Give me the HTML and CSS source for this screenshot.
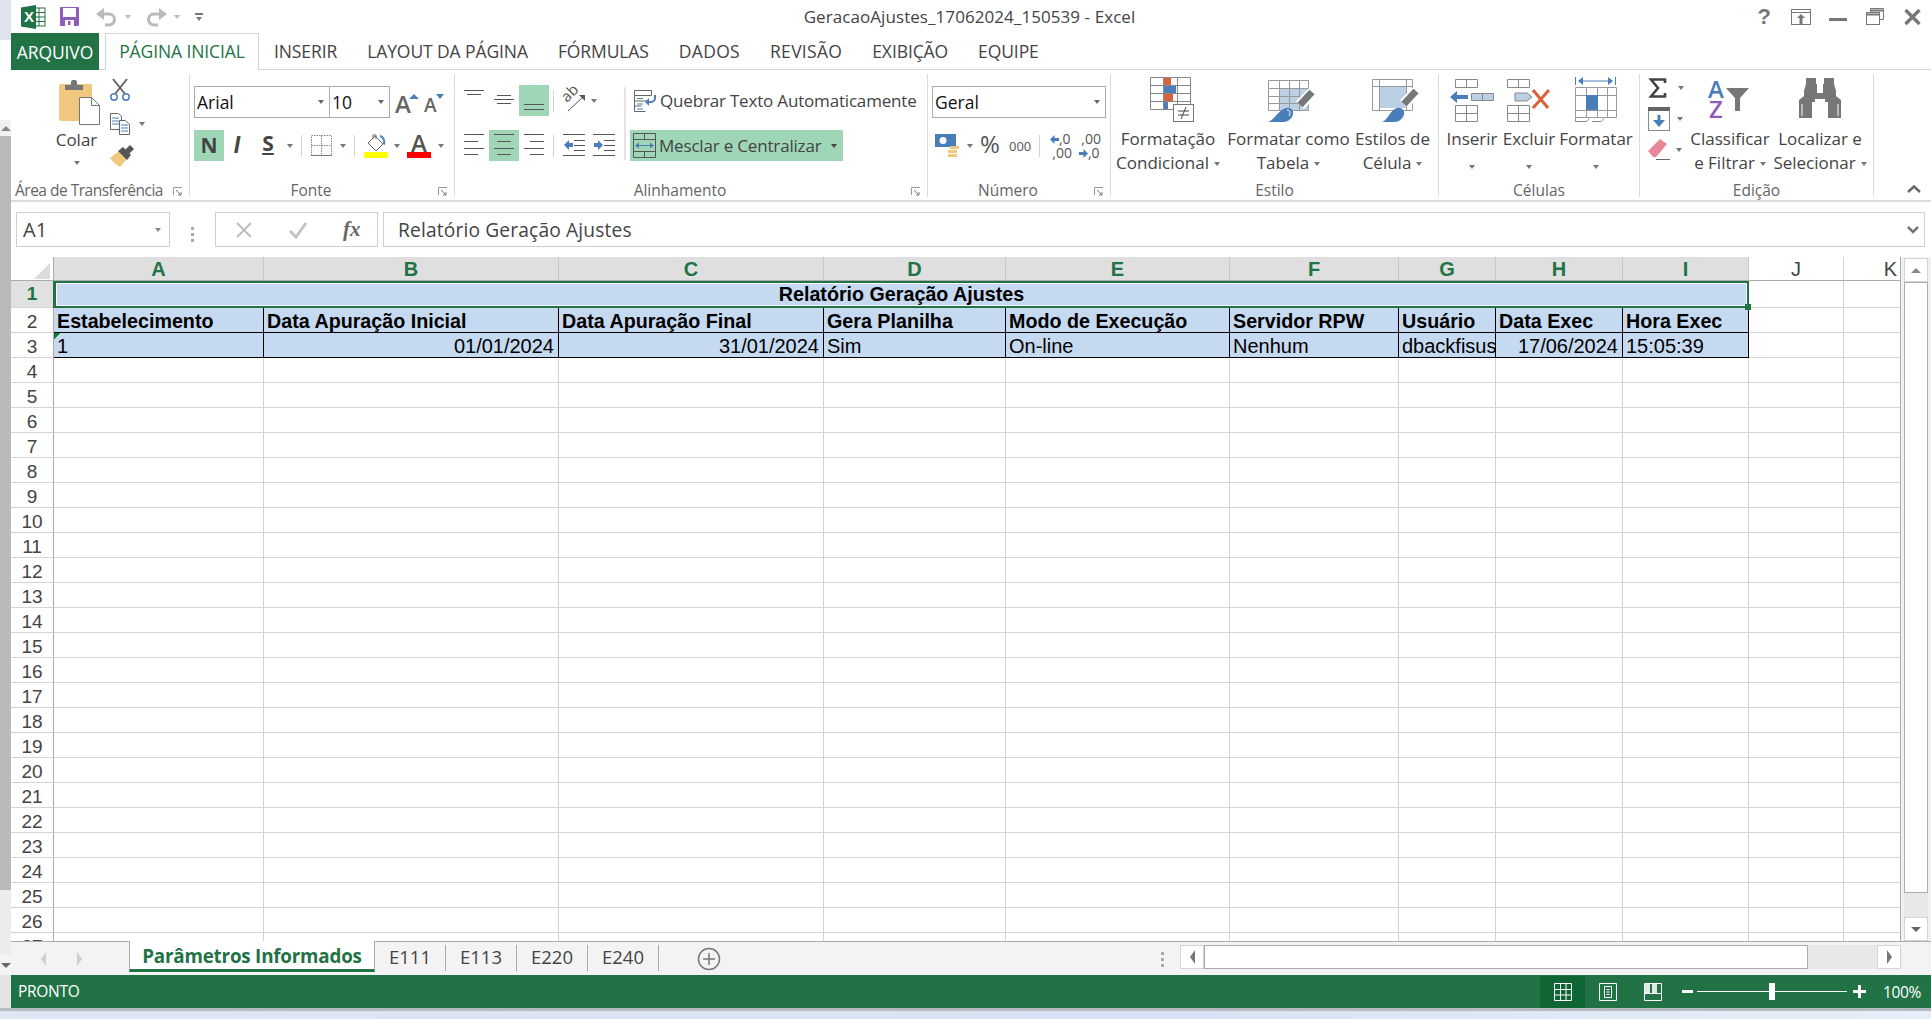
FILE: index.html
```html
<!DOCTYPE html>
<html lang="pt-BR">
<head>
<meta charset="utf-8">
<title>GeracaoAjustes_17062024_150539 - Excel</title>
<link rel="stylesheet" href="styles.css">
</head>
<body>
<div class="app">
  <aside class="side">
    <div class="side-top"></div>
    <div class="side-white"></div>
    <div class="side-arrow"><b class="tri-up"></b></div>
    <div class="side-thumb"></div>
    <div class="side-track"></div>
    <div class="side-arrow down"><b class="tri-down"></b></div>
    <div class="side-end"></div>
  </aside>
  <main class="main">
    <header class="titlebar">
      <div class="qat">
        <svg class="i-logo" viewBox="0 0 24 24"><rect x="14" y="3" width="10" height="18" fill="#fff" stroke="#1f7246"/><path d="M14 7.500h10M14 12h10M14 16.500h10M18 3v18" stroke="#1f7246" fill="none"/><path d="M0 2.500 15 0v24L0 21.500z" fill="#1f7246"/><text x="3" y="17" class="logo-x">X</text></svg>
        <svg class="i-save" viewBox="0 0 19 19"><path d="M0 1a1 1 0 0 1 1-1h17a1 1 0 0 1 1 1v17a1 1 0 0 1-1 1H1a1 1 0 0 1-1-1z" fill="#8f5db7"/><rect x="3" y="1" width="13" height="9" fill="#fff"/><rect x="5" y="13" width="9" height="6" fill="#fff"/><rect x="8" y="14" width="2.500" height="4" fill="#8f5db7"/></svg>
        <svg class="i-undo" viewBox="0 0 22 20"><path d="M0 7 8 1v12z" fill="#bbb"/><path d="M7 7h6a5.500 5.500 0 0 1 0 11H9" fill="none" stroke="#bbb" stroke-width="3"/></svg>
        <b class="caret pale m7"></b>
        <svg class="i-undo m14" viewBox="0 0 22 20"><path d="M22 7 14 1v12z" fill="#bbb"/><path d="M15 7H9a5.500 5.500 0 0 0 0 11h4" fill="none" stroke="#bbb" stroke-width="3"/></svg>
        <b class="caret pale m7"></b>
        <span class="custom m15"><i></i><b class="caret"></b></span>
      </div>
      <div class="doc-title">GeracaoAjustes_17062024_150539 - Excel</div>
      <div class="winbtns">
        <span class="help">?</span>
        <svg class="w-box" viewBox="0 0 20 16"><rect x=".5" y=".5" width="19" height="15" fill="none" stroke="#777"/><path d="M1 3.500h18" stroke="#777"/><path d="M10 5l4 4h-2.500v6h-3V9H6z" fill="#777"/></svg>
        <svg class="w-min" viewBox="0 0 18 3"><rect width="18" height="3" fill="#777"/></svg>
        <svg class="w-res" viewBox="0 0 18 17"><path d="M4.500 4V.5h13v11H14" fill="none" stroke="#777"/><path d="M4 2.500h14" stroke="#777" stroke-width="2"/><rect x=".5" y="4.500" width="13" height="12" fill="#fff" stroke="#777"/><path d="M0 6.500h14" stroke="#777" stroke-width="2"/></svg>
        <svg class="w-close" viewBox="0 0 17 16"><path d="M1.500 1l14 14M15.500 1l-14 14" stroke="#777" stroke-width="3.400"/></svg>
      </div>
    </header>

    <nav class="tabs">
      <a class="tab file">ARQUIVO</a>
      <a class="tab active">PÁGINA INICIAL</a>
      <a class="tab">INSERIR</a>
      <a class="tab">LAYOUT DA PÁGINA</a>
      <a class="tab">FÓRMULAS</a>
      <a class="tab wide">DADOS</a>
      <a class="tab wide">REVISÃO</a>
      <a class="tab">EXIBIÇÃO</a>
      <a class="tab">EQUIPE</a>
    </nav>

    <section class="ribbon">
      <div class="grp g-clip">
        <div class="grp-body clip-body">
          <div class="paste">
            <svg class="i-paste" viewBox="0 0 42 46"><rect y="5" width="33" height="37" rx="2" fill="#efc77f"/><path d="M6 11V6h6V3a2 2 0 0 1 2-2h2a2 2 0 0 1 2 2v3h6v5z" fill="#777"/><path d="M20.500 18.500h12l8 8v19h-20z" fill="#fff" stroke="#777"/><path d="M32.500 18.500v8h8" fill="none" stroke="#777"/></svg>
            <span class="lbl">Colar</span>
            <b class="caret big-caret"></b>
          </div>
          <div class="clip-tools">
            <svg class="i-cut" viewBox="0 0 20 22"><path d="M3 0l12 15M17 0L5 15" stroke="#666" stroke-width="2" fill="none"/><circle cx="4" cy="18" r="3.200" fill="#fff" stroke="#4a7ebb" stroke-width="1.500"/><circle cx="16" cy="18" r="3.200" fill="#fff" stroke="#4a7ebb" stroke-width="1.500"/></svg>
            <span class="row-c"><svg class="i-copy" viewBox="0 0 20 22"><path d="M.5.500h8l3 3v13H.5z" fill="#fff" stroke="#666"/><path d="M2 5h7M2 8h7M2 11h7" stroke="#4a7ebb"/><path d="M9.500 7.500h6l4 4v10h-10z" fill="#fff" stroke="#666"/><path d="M11 12h7M11 15h7M11 18h7" stroke="#4a7ebb"/></svg><b class="caret m9"></b></span>
            <svg class="i-brush" viewBox="0 0 24 22"><path d="M0 13l9-7 8 8-7 8C6 20 3 17 0 13z" fill="#efc77f"/><path d="M8 6l5-4 8 8-4 5z" fill="#555"/><path d="M15 5l5-5 4 4-5 5z" fill="#555"/></svg>
          </div>
        </div>
        <div class="grp-label launchable tight">Área de Transferência<svg class="launch" viewBox="0 0 10 9"><path d="M.5 8V.5H9" fill="none" stroke="#999"/><path d="M3 3l5 5M8 5v3H5" fill="none" stroke="#777"/></svg></div>
      </div>

      <div class="grp g-font">
        <div class="grp-body stack">
          <div class="rbrow">
            <div class="combo font-name"><span>Arial</span><b class="caret"></b></div>
            <div class="combo font-size"><span>10</span><b class="caret"></b></div>
            <span class="grow-a m5">A<b class="tip up"></b></span>
            <span class="shrink-a m12">A<b class="tip dn"></b></span>
          </div>
          <div class="rbrow">
            <span class="fbtn on bold">N</span>
            <span class="fbtn ital">I</span>
            <span class="fbtn under m6">S</span>
            <b class="caret m7"></b>
            <i class="vsep m8"></i>
            <svg class="i-border m9" viewBox="0 0 21 21"><path d="M.5.500h20v20H.5zM10.500.5v20M.5 10.500h20" fill="none" stroke="#888" stroke-dasharray="1.500 1"/><path d="M0 20.500h21" stroke="#777"/></svg>
            <b class="caret m8"></b>
            <i class="vsep m8"></i>
            <svg class="i-fill m9" viewBox="0 0 24 24"><path d="M11 2l8 8-7 7-8-8z" fill="#fff" stroke="#666"/><path d="M9 5V1h3v4" fill="none" stroke="#666"/><path d="M16 1c4 1 6 5 5 10l-2-1c1-4-1-6-3-7z" fill="#4a7ebb"/><rect y="18" width="24" height="6" fill="#ffff00"/></svg>
            <b class="caret m6"></b>
            <span class="fcolor m7">A</span>
            <b class="caret m7"></b>
          </div>
        </div>
        <div class="grp-label launchable">Fonte<svg class="launch" viewBox="0 0 10 9"><path d="M.5 8V.5H9" fill="none" stroke="#999"/><path d="M3 3l5 5M8 5v3H5" fill="none" stroke="#777"/></svg></div>
      </div>

      <div class="grp g-align">
        <div class="grp-body align-body">
          <div class="align-left">
            <div class="rbrow">
              <span class="cell"><svg class="i-line" viewBox="0 0 20 31"><path d="M0 5.500h20M3 9.500h14" stroke="#555"/></svg></span>
              <span class="cell"><svg class="i-line" viewBox="0 0 20 31"><path d="M3 10.500h14M0 14.500h20M3 18.500h14" stroke="#555"/></svg></span>
              <span class="cell on"><svg class="i-line" viewBox="0 0 20 31"><path d="M0 19.500h20M0 24.500h20" stroke="#555"/></svg></span>
              <i class="vsep m4"></i>
              <svg class="i-orient m11" viewBox="0 0 21 22"><text class="orient-t" transform="translate(2 13) rotate(-45)" x="0" y="0">ab</text><path d="M3 21L19 6" stroke="#555" fill="none"/><path d="M14 5h6v6z" fill="#555"/></svg>
              <b class="caret m5"></b>
            </div>
            <div class="rbrow">
              <span class="cell"><svg class="i-line" viewBox="0 0 20 31"><path d="M0 4.500h20M0 11.500h14M0 18.500h20M0 24.500h14" stroke="#555"/></svg></span>
              <span class="cell on"><svg class="i-line" viewBox="0 0 20 31"><path d="M0 4.500h20M3 11.500h14M0 18.500h20M3 24.500h14" stroke="#555"/></svg></span>
              <span class="cell"><svg class="i-line" viewBox="0 0 20 31"><path d="M0 4.500h20M6 11.500h14M0 18.500h20M6 24.500h14" stroke="#555"/></svg></span>
              <i class="vsep m4"></i>
              <svg class="i-indent m9" viewBox="0 0 22 31"><path d="M0 4.500h22M11 10.500h11M11 15.500h11M11 20.500h11M0 25.500h22" stroke="#555"/><path d="M1 15l5-5v3h4v4H6v3z" fill="#4a7ebb"/></svg>
              <svg class="i-indent m8" viewBox="0 0 22 31"><path d="M0 4.500h22M11 10.500h11M11 15.500h11M11 20.500h11M0 25.500h22" stroke="#555"/><path d="M10 15l-5-5v3H1v4h4v3z" fill="#4a7ebb"/></svg>
            </div>
          </div>
          <i class="thick"></i>
          <div class="align-right">
            <div class="wrap rbrow">
              <svg class="i-wrap" viewBox="0 0 23 22"><path d="M.5.500h17v5H.5zM.5 5.500v16h11M.5 11h13M.5 16h7" fill="none" stroke="#666"/><path d="M3 8.500h6M3 14h6M3 19h6" stroke="#4a7ebb"/><path d="M21 5v3a4 4 0 0 1-4 4h-4" fill="none" stroke="#4a7ebb" stroke-width="2"/><path d="M11 12l4-4v8z" fill="#4a7ebb"/></svg>
              <span class="lbl wrap-t">Quebrar Texto Automaticamente</span>
            </div>
            <div class="merge rbrow">
              <svg class="i-merge" viewBox="0 0 23 25"><path d="M.5.500h22v24H.5zM.5 6.500h22M.5 18.500h22M11.500.5v6M11.500 18.500v6" fill="none" stroke="#555"/><path d="M3 12.500h17" stroke="#4a7ebb"/><path d="M2 12.500l4-3v6zM21 12.500l-4-3v6z" fill="#4a7ebb"/></svg>
              <span class="lbl wrap-t">Mesclar e Centralizar</span>
              <b class="caret dark m10"></b>
            </div>
          </div>
        </div>
        <div class="grp-label launchable">Alinhamento<svg class="launch" viewBox="0 0 10 9"><path d="M.5 8V.5H9" fill="none" stroke="#999"/><path d="M3 3l5 5M8 5v3H5" fill="none" stroke="#777"/></svg></div>
      </div>

      <div class="grp g-num">
        <div class="grp-body stack">
          <div class="rbrow"><div class="combo num-fmt"><span>Geral</span><b class="caret"></b></div></div>
          <div class="rbrow num-tools">
            <svg class="i-cur" viewBox="0 0 25 24"><rect width="21" height="13" fill="#4a7ebb"/><circle cx="8" cy="6.500" r="3.500" fill="#fff"/><path d="M15 12h9v3h-9zM13 16h9v3h-9zM13 20h9v3h-9z" fill="#efc77f"/></svg>
            <b class="caret m7"></b>
            <span class="pct m7">%</span>
            <span class="thou m9">000</span>
            <i class="vsep m9"></i>
            <span class="dec m10"><svg class="i-arrow" viewBox="0 0 9 9"><path d="M0 4.500L4.500 0v3H9v3H4.500v3z" fill="#4a7ebb"/></svg><em>,0</em><em class="w2">,00</em></span>
            <span class="dec m7"><em class="w3">,00</em><em class="w4">,0</em><svg class="i-arrow second" viewBox="0 0 9 9"><path d="M9 4.500L4.500 0v3H0v3h4.500v3z" fill="#4a7ebb"/></svg></span>
          </div>
        </div>
        <div class="grp-label launchable">Número<svg class="launch" viewBox="0 0 10 9"><path d="M.5 8V.5H9" fill="none" stroke="#999"/><path d="M3 3l5 5M8 5v3H5" fill="none" stroke="#777"/></svg></div>
      </div>

      <div class="grp g-style">
        <div class="grp-body bigs">
          <div class="big b-cf">
            <span class="ico"><svg class="i-cf" viewBox="0 0 44 45"><path d="M13 0h8v8h-8zM13 16h10v8H13z" fill="#d9613c"/><path d="M13 8h13v8H13zM13 24h5v8h-5z" fill="#4a7ebb"/><path d="M.5.500h40v32H.5zM.5 8.500h40M.5 16.500h40M.5 24.500h40M13.500.5v32M27.500.5v32" fill="none" stroke="#888"/><rect x="23.500" y="27.500" width="20" height="17" fill="#fff" stroke="#777"/><path d="M28 34h11M28 38h11M36 30l-5 12" stroke="#444" fill="none"/></svg></span>
            <span class="t">Formatação</span><span class="t">Condicional<b class="caret m5 mid"></b></span>
          </div>
          <div class="big b-tb">
            <span class="ico"><svg class="i-tb" viewBox="0 0 46 42"><rect x="11" y="8" width="30" height="22" fill="#bcd0e5"/><path d="M.5.500h40v30H.5zM.5 8.500h40M.5 16.500h40M.5 23.500h40M11.500.5v30M21.500.5v30M31.500.5v30" fill="none" stroke="#999"/><path d="M45 12l-13 13" stroke="#fff" stroke-width="11"/><path d="M44 12L32 25" stroke="#777" stroke-width="7"/><path d="M0 42c7-2 10-12 18-14 6-1 9 4 6 9-2 3-5 5-9 5z" fill="#4a7ebb"/><path d="M19 30c3 0 4 3 2 6" fill="none" stroke="#fff"/></svg></span>
            <span class="t">Formatar como</span><span class="t">Tabela<b class="caret m5 mid"></b></span>
          </div>
          <div class="big b-st">
            <span class="ico"><svg class="i-st" viewBox="0 0 46 43"><rect x="7" y="7" width="27" height="22" fill="#bcd0e5"/><path d="M.5.500h40v31H.5zM.5 7.500h40M7.500.5v31M34.500.5v31" fill="none" stroke="#999"/><path d="M45 12L32 25" stroke="#fff" stroke-width="11"/><path d="M44 12L32 25" stroke="#777" stroke-width="7"/><path d="M10 43c6-2 8-12 15-14 6-1 9 4 6 9-2 3-5 5-9 5z" fill="#4a7ebb"/></svg></span>
            <span class="t">Estilos de</span><span class="t">Célula<b class="caret m5 mid"></b></span>
          </div>
        </div>
        <div class="grp-label">Estilo</div>
      </div>

      <div class="grp g-cells">
        <div class="grp-body bigs">
          <div class="big b-in">
            <span class="ico"><svg class="i-in" viewBox="0 0 44 43"><path d="M5.500.5h22v8h-22zM16.500.5v8M5.500 26.500h22v16h-22zM5.500 34.500h22M16.500 26.500v16" fill="none" stroke="#888"/><path d="M21.500 14.500h22v7h-22z" fill="#bcd0e5" stroke="#888"/><path d="M32.500 14.500v7" stroke="#888"/><path d="M0 18l7-6v4h11v4H7v4z" fill="#4a7ebb"/></svg></span>
            <span class="t">Inserir</span><span class="t"><b class="caret"></b></span>
          </div>
          <div class="big b-ex">
            <span class="ico"><svg class="i-ex" viewBox="0 0 44 43"><path d="M.5.500h22v8H.5zM11.500.5v8M.5 26.500h22v16H.5zM.5 34.500h22M11.500 26.500v16" fill="none" stroke="#888"/><path d="M8 14h12l5 4-5 4H8z" fill="#bcd0e5" stroke="#888"/><path d="M26 11l15 18M42 11L26 29" stroke="#d9613c" stroke-width="3" fill="none"/></svg></span>
            <span class="t">Excluir</span><span class="t"><b class="caret"></b></span>
          </div>
          <div class="big b-fm">
            <span class="ico"><svg class="i-fm" viewBox="0 0 42 46"><path d="M.5 1v8M40.500 1v8M5 5h31" stroke="#4a7ebb" fill="none"/><path d="M3 5l5-4v8zM38 5l-5-4v8z" fill="#4a7ebb"/><path d="M.5 11.500h41v30H.5zM.5 19.500h41M.5 34.500h41M11.500 11.500v30M22.500 11.500v30M32.500 11.500v30" fill="none" stroke="#999"/><rect x="11" y="19" width="12" height="15" fill="#4a7ebb"/><path d="M.5 42v3.500h11l3-3M17 45.500h9l3-3" fill="none" stroke="#888"/></svg></span>
            <span class="t">Formatar</span><span class="t"><b class="caret"></b></span>
          </div>
        </div>
        <div class="grp-label">Células</div>
      </div>

      <div class="grp g-edit">
        <div class="grp-body bigs">
          <div class="edit-tools">
            <span class="row-c"><svg class="i-sum" viewBox="0 0 18 20"><path d="M17 5V1.500H3L10 10l-7 8.500h14V15" fill="none" stroke="#444" stroke-width="2.600"/></svg><b class="caret m12"></b></span>
            <span class="row-c"><svg class="i-down" viewBox="0 0 22 24"><rect x=".5" y=".5" width="21" height="23" fill="#fff" stroke="#888"/><rect width="22" height="4" fill="#666"/><path d="M11 8v9" stroke="#4a7ebb" stroke-width="3"/><path d="M5 13h12l-6 7z" fill="#4a7ebb"/></svg><b class="caret m7"></b></span>
            <span class="row-c eraser-row"><svg class="i-eraser" viewBox="0 0 22 21"><path d="M0 12L12 0l7 5L8 18H5z" fill="#e8869a"/><path d="M8 20.500h14" stroke="#666"/></svg><b class="caret m6"></b></span>
          </div>
          <div class="big b-so">
            <span class="ico so-ico"><span class="az"><span class="az-a">A</span><span class="az-z">Z</span></span><svg class="i-fun" viewBox="0 0 23 23"><path d="M0 0h23L14 10v13H9V10z" fill="#777"/></svg></span>
            <span class="t">Classificar</span><span class="t">e Filtrar<b class="caret m5 mid"></b></span>
          </div>
          <div class="big b-lo">
            <span class="ico"><svg class="i-bin" viewBox="0 0 42 40"><path d="M7 0h10v6h1v9h6V6h1V0h10v6l2 7v5l5 4v18H29V24h-3v-3h-10v3h-3v16H0V22l5-4v-5l2-7z" fill="#777"/><path d="M3 26v12M39 26v12" stroke="#fff"/></svg></span>
            <span class="t">Localizar e</span><span class="t">Selecionar<b class="caret m5 mid"></b></span>
          </div>
        </div>
        <div class="grp-label">Edição</div>
      </div>

      <div class="collapse"><svg class="i-chev" viewBox="0 0 14 8"><path d="M1 7l6-5.500L13 7" fill="none" stroke="#666" stroke-width="2.400"/></svg></div>
    </section>

    <section class="formula">
      <div class="namebox"><span>A1</span><b class="caret"></b></div>
      <span class="fdots"><i></i><i></i><i></i></span>
      <div class="fbuttons">
        <svg class="i-x" viewBox="0 0 16 16"><path d="M1 1l14 14M15 1L1 15" stroke="#bbb" stroke-width="1.800"/></svg>
        <svg class="i-v" viewBox="0 0 18 16"><path d="M1 9l6 6L17 1" fill="none" stroke="#c4c4c4" stroke-width="3"/></svg>
        <span class="fx">fx</span>
      </div>
      <div class="finput"><span>Relatório Geração Ajustes</span><svg class="i-fchev" viewBox="0 0 12 8"><path d="M1 1l5 5 5-5" fill="none" stroke="#777" stroke-width="2.500"/></svg></div>
    </section>

    <section class="sheet">
      <div class="grid-wrap">
        <table class="grid">
          <colgroup><col class="c0"><col class="ca"><col class="cb"><col class="cc"><col class="cd"><col class="ce"><col class="cf"><col class="cg"><col class="ch"><col class="ci"><col class="cj"><col class="ck"></colgroup>
          <thead>
            <tr><th class="corner"><svg class="i-corner" viewBox="0 0 16 16"><path d="M16 0v16H0z" fill="#dcdcdc"/></svg></th><th class="sel">A</th><th class="sel">B</th><th class="sel">C</th><th class="sel">D</th><th class="sel">E</th><th class="sel">F</th><th class="sel">G</th><th class="sel">H</th><th class="sel">I</th><th>J</th><th class="k">K</th></tr>
          </thead>
          <tbody>
            <tr class="r1"><th class="rh sel">1</th><td colspan="9" class="title-cell">Relatório Geração Ajustes<span class="handle"></span></td><td></td><td></td></tr>
            <tr class="fill head"><th class="rh">2</th><td>Estabelecimento</td><td>Data Apuração Inicial</td><td>Data Apuração Final</td><td>Gera Planilha</td><td>Modo de Execução</td><td>Servidor RPW</td><td>Usuário</td><td>Data Exec</td><td>Hora Exec</td><td class="plain"></td><td class="plain"></td></tr>
            <tr class="fill data"><th class="rh">3</th><td class="flag">1</td><td class="num">01/01/2024</td><td class="num">31/01/2024</td><td>Sim</td><td>On-line</td><td>Nenhum</td><td>dbackfisust</td><td class="num">17/06/2024</td><td>15:05:39</td><td class="plain"></td><td class="plain"></td></tr>
            <tr><th class="rh">4</th><td></td><td></td><td></td><td></td><td></td><td></td><td></td><td></td><td></td><td></td><td></td></tr>
            <tr><th class="rh">5</th><td></td><td></td><td></td><td></td><td></td><td></td><td></td><td></td><td></td><td></td><td></td></tr>
            <tr><th class="rh">6</th><td></td><td></td><td></td><td></td><td></td><td></td><td></td><td></td><td></td><td></td><td></td></tr>
            <tr><th class="rh">7</th><td></td><td></td><td></td><td></td><td></td><td></td><td></td><td></td><td></td><td></td><td></td></tr>
            <tr><th class="rh">8</th><td></td><td></td><td></td><td></td><td></td><td></td><td></td><td></td><td></td><td></td><td></td></tr>
            <tr><th class="rh">9</th><td></td><td></td><td></td><td></td><td></td><td></td><td></td><td></td><td></td><td></td><td></td></tr>
            <tr><th class="rh">10</th><td></td><td></td><td></td><td></td><td></td><td></td><td></td><td></td><td></td><td></td><td></td></tr>
            <tr><th class="rh">11</th><td></td><td></td><td></td><td></td><td></td><td></td><td></td><td></td><td></td><td></td><td></td></tr>
            <tr><th class="rh">12</th><td></td><td></td><td></td><td></td><td></td><td></td><td></td><td></td><td></td><td></td><td></td></tr>
            <tr><th class="rh">13</th><td></td><td></td><td></td><td></td><td></td><td></td><td></td><td></td><td></td><td></td><td></td></tr>
            <tr><th class="rh">14</th><td></td><td></td><td></td><td></td><td></td><td></td><td></td><td></td><td></td><td></td><td></td></tr>
            <tr><th class="rh">15</th><td></td><td></td><td></td><td></td><td></td><td></td><td></td><td></td><td></td><td></td><td></td></tr>
            <tr><th class="rh">16</th><td></td><td></td><td></td><td></td><td></td><td></td><td></td><td></td><td></td><td></td><td></td></tr>
            <tr><th class="rh">17</th><td></td><td></td><td></td><td></td><td></td><td></td><td></td><td></td><td></td><td></td><td></td></tr>
            <tr><th class="rh">18</th><td></td><td></td><td></td><td></td><td></td><td></td><td></td><td></td><td></td><td></td><td></td></tr>
            <tr><th class="rh">19</th><td></td><td></td><td></td><td></td><td></td><td></td><td></td><td></td><td></td><td></td><td></td></tr>
            <tr><th class="rh">20</th><td></td><td></td><td></td><td></td><td></td><td></td><td></td><td></td><td></td><td></td><td></td></tr>
            <tr><th class="rh">21</th><td></td><td></td><td></td><td></td><td></td><td></td><td></td><td></td><td></td><td></td><td></td></tr>
            <tr><th class="rh">22</th><td></td><td></td><td></td><td></td><td></td><td></td><td></td><td></td><td></td><td></td><td></td></tr>
            <tr><th class="rh">23</th><td></td><td></td><td></td><td></td><td></td><td></td><td></td><td></td><td></td><td></td><td></td></tr>
            <tr><th class="rh">24</th><td></td><td></td><td></td><td></td><td></td><td></td><td></td><td></td><td></td><td></td><td></td></tr>
            <tr><th class="rh">25</th><td></td><td></td><td></td><td></td><td></td><td></td><td></td><td></td><td></td><td></td><td></td></tr>
            <tr><th class="rh">26</th><td></td><td></td><td></td><td></td><td></td><td></td><td></td><td></td><td></td><td></td><td></td></tr>
            <tr><th class="rh">27</th><td></td><td></td><td></td><td></td><td></td><td></td><td></td><td></td><td></td><td></td><td></td></tr>
          </tbody>
        </table>
      </div>
      <div class="vscroll">
        <div class="sbtn"><b class="tri-up"></b></div>
        <div class="vthumb"></div>
        <div class="vtrack"></div>
        <div class="sbtn"><b class="tri-down"></b></div>
      </div>
    </section>

    <section class="sheetbar">
      <div class="navs"><b class="tri-l"></b><b class="tri-r"></b></div>
      <div class="stab on">Parâmetros Informados</div>
      <div class="stab">E111</div>
      <div class="stab">E113</div>
      <div class="stab">E220</div>
      <div class="stab">E240</div>
      <svg class="i-plus" viewBox="0 0 24 24"><circle cx="12" cy="12" r="10.500" fill="none" stroke="#777" stroke-width="1.500"/><path d="M12 6v12M6 12h12" stroke="#777" stroke-width="1.500"/></svg>
      <span class="fdots bar-dots"><i></i><i></i><i></i></span>
      <div class="hscroll">
        <div class="hbtn"><b class="tri-l dark"></b></div>
        <div class="hthumb"></div>
        <div class="htrack"></div>
        <div class="hbtn"><b class="tri-r dark"></b></div>
      </div>
    </section>

    <footer class="status">
      <span class="ready">PRONTO</span>
      <div class="views">
        <span class="view on"><svg class="i-view" viewBox="0 0 18 18"><path d="M.5.500h17v17H.5zM.5 6.500h17M.5 12h17M6.500.5v17M12 .5v17" fill="none" stroke="#fff"/></svg></span>
        <span class="view"><svg class="i-view" viewBox="0 0 18 18"><path d="M.5.500h17v17H.5z" fill="none" stroke="#fff"/><path d="M5.500 3.500h7v11h-7zM7.500 6.500h3M7.500 9h3M7.500 11.500h3" fill="none" stroke="#fff"/></svg></span>
        <span class="view"><svg class="i-view" viewBox="0 0 18 18"><path d="M.5.500h17v17H.5zM.5 10.500h17" fill="none" stroke="#fff"/><path d="M1 1h5v10H1zM8 1h5v10H8z" fill="#fff" opacity=".85"/></svg></span>
      </div>
      <div class="zoom">
        <i class="z-minus"></i>
        <div class="z-track"><i class="z-thumb"></i></div>
        <i class="z-plus"></i>
      </div>
      <span class="pct100">100%</span>
    </footer>
  </main>
  <div class="desk"></div>
</div>
</body>
</html>
```
FILE: styles.css
```css
*{box-sizing:border-box}
html,body{margin:0;padding:0;width:1931px;height:1019px;overflow:hidden;background:#fff}
body{font-family:"Open Sans","Liberation Sans",sans-serif;color:#444}
svg{display:block;flex:none;overflow:visible}
.app{display:grid;grid-template-columns:11px 1920px;grid-template-rows:1008px 11px;width:1931px;height:1019px}
.m1{margin-left:1px}.m4{margin-left:4px}.m5{margin-left:5px}.m6{margin-left:6px}.m7{margin-left:7px}.m8{margin-left:8px}.m9{margin-left:9px}.m10{margin-left:10px}.m11{margin-left:11px}.m12{margin-left:12px}.m14{margin-left:14px}.m15{margin-left:15px}

/* left strip */
.side{display:flex;flex-direction:column;background:#fff}
.side-top{height:40px;background:#dee3ec}
.side-white{height:80px;background:#fff;border-top-right-radius:8px}
.side-arrow{height:16px;background:#f1f1f1;display:flex;align-items:center;justify-content:center}
.side-thumb{height:754px;background:#b9b9b9}
.side-track{height:65px;background:#ececec}
.side-arrow.down{height:20px;background:#f4f4f4}
.side-end{flex:1;background:#e4e4e4}
.tri-up{width:0;height:0;border:solid transparent;border-width:0 5px 5px;border-bottom-color:#888;display:block}
.tri-down{width:0;height:0;border:solid transparent;border-width:5px 5px 0;border-top-color:#666;display:block}
.tri-l{width:0;height:0;border:solid transparent;border-width:7px 5px 7px 0;border-right-color:#cfcfcf;display:block}
.tri-r{width:0;height:0;border:solid transparent;border-width:7px 0 7px 5px;border-left-color:#cfcfcf;display:block}
.tri-l.dark{border-right-color:#777}
.tri-r.dark{border-left-color:#777}
.desk{grid-column:1/3;background:linear-gradient(90deg,#dfe6f4,#d9e2f4 60%,#e6eef8);border-top:3px solid #b6b9bd}

.main{display:flex;flex-direction:column;min-width:0;background:#fff}

/* title bar */
.titlebar{height:33px;display:grid;grid-template-columns:1fr auto 1fr;align-items:center}
.qat{display:flex;align-items:center;padding-left:10px}
.i-logo{width:24px;height:24px}
.logo-x{font:bold 15px "Liberation Sans",sans-serif;fill:#fff}
.i-save{width:19px;height:19px;margin-left:15px}
.i-undo{width:22px;height:20px}
.i-save+.i-undo{margin-left:17px}
.caret{display:inline-block;flex:none;width:0;height:0;border:solid transparent;border-width:4px 3.500px 0;border-top-color:#777}
.caret.pale{border-top-color:#bbb}
.caret.dark{border-top-color:#444}
.caret.mid{vertical-align:middle}
.custom{display:flex;flex-direction:column;gap:2px;align-items:center}
.custom i{display:block;width:8px;height:2px;background:#777}
.doc-title{font-size:17px;color:#444;letter-spacing:.07px;padding-right:3px}
.winbtns{display:flex;align-items:center;justify-content:flex-end;padding-right:10px;height:33px}
.help{font:bold 22px "Liberation Sans",sans-serif;color:#777;margin-right:20px}
.w-box{width:20px;height:16px}
.w-min{width:18px;height:3px;margin-left:18px;margin-top:6px}
.w-res{width:18px;height:17px;margin-left:19px}
.w-close{width:17px;height:16px;margin-left:20px}

/* ribbon tabs */
.tabs{height:37px;display:flex;align-items:stretch;border-bottom:1px solid #d4d4d4}
.tab{display:flex;align-items:center;padding:0 15px;font-size:17.500px;color:#444;letter-spacing:-.1px}
.tab.wide{letter-spacing:.3px}
.tab.file{background:#217346;color:#fff;width:88px;padding:0;justify-content:center;margin-right:6px;height:37px}
.tab.active{color:#217346;border:solid #d4d4d4;border-width:1px 1px 0;background:#fff;height:37px;padding:0 13px 2px;width:154px;justify-content:center}

/* ribbon */
.ribbon{height:132px;display:flex;align-items:flex-start;padding-top:4px;border-bottom:2px solid #dcdcdc}
.grp{height:123px;display:flex;flex-direction:column;border-right:1px solid #dcdcdc;flex:none}
.g-clip{width:179px}.g-font{width:265px}.g-align{width:473px}.g-num{width:183px}.g-style{width:328px}.g-cells{width:201px}.g-edit{width:234px}
.grp-body{flex:1;min-height:0}
.grp-label{height:22px;margin-bottom:-4px;font-size:15.500px;line-height:20px;color:#666;display:flex;align-items:center;justify-content:center;position:relative;flex:none}
.grp-label.launchable{padding-right:22px}
.grp-label.tight{letter-spacing:-.5px;white-space:nowrap}
.launch{width:10px;height:9px;position:absolute;right:6px;top:8px}
.lbl{font-size:17px;color:#444}
.stack{padding:12px 0 0 4px;display:flex;flex-direction:column;gap:12px}
.rbrow{display:flex;align-items:center}
.row-c{display:flex;align-items:center}

/* clipboard */
.clip-body{display:flex;padding-left:39px}
.paste{width:59px;display:flex;flex-direction:column;align-items:center;padding-top:5px}
.i-paste{width:42px;height:46px}
.paste .lbl{line-height:24px;margin:3px 6px 0 0}
.big-caret{margin:9px 6px 0 0}
.clip-tools{display:flex;flex-direction:column;padding-top:5px;margin-left:1px;gap:11px}
.i-cut{width:20px;height:22px}
.i-copy{width:20px;height:22px;margin-top:1px}
.i-brush{width:24px;height:22px;margin-top:-1px}

/* font */
.combo{height:32px;border:1px solid #ababab;display:flex;align-items:center;justify-content:space-between;padding:0 5px 0 2px;font-size:17.500px;color:#111;background:#fff}
.combo .caret{border-top-color:#666}
.font-name{width:136px}
.font-size{width:61px;margin-left:-1px}
.grow-a,.shrink-a{position:relative;font-weight:600;color:#666;line-height:1;display:block}
.grow-a{font-size:24px;width:17px;padding-top:3px}
.shrink-a{font-size:19px;width:14px;padding-top:7px}
.tip{position:absolute;width:0;height:0;border:solid transparent;top:5px;left:14px}
.tip.up{border-width:0 5px 5px;border-bottom-color:#4a7ebb}
.tip.dn{border-width:5px 4px 0;border-top-color:#4a7ebb;left:12px}
.fbtn{height:31px;display:flex;align-items:center;justify-content:center;font-size:21px;color:#444;flex:none;width:26px}
.fbtn.on{background:#9fd6b6}
.bold{font-weight:700;width:30px;padding-bottom:2px}
.ital{font-family:"Liberation Sans",sans-serif;font-style:italic;font-weight:700;font-size:23px}
.under{width:24px;font-weight:700;text-decoration:underline;text-underline-offset:2px;padding-bottom:5px}
.vsep{display:block;width:1px;height:22px;background:#d4d4d4;flex:none}
.i-border{width:21px;height:21px}
.i-fill{width:24px;height:24px}
.fcolor{width:24px;height:25px;font-size:24px;font-weight:600;line-height:20px;color:#555;text-align:center;border-bottom:6px solid #f00;display:block}

/* align */
.align-body{display:flex;padding:11px 0 0 4px}
.align-left{width:165px;display:flex;flex-direction:column;gap:14px}
.cell{width:30px;height:31px;display:flex;align-items:center;justify-content:center;flex:none}
.cell.on{background:#9fd6b6}
.i-line{width:20px;height:31px}
.i-orient{width:21px;height:22px}
.orient-t{font:15px "Open Sans",sans-serif;fill:#555}
.i-indent{width:22px;height:31px}
.thick{display:block;width:2px;height:73px;background:#e4e4e4;margin-top:2px;flex:none}
.align-right{margin-left:4px;display:flex;flex-direction:column;gap:14px}
.wrap{height:31px;padding-left:4px}
.i-wrap{width:23px;height:22px}
.wrap-t{margin-left:3px;white-space:nowrap;letter-spacing:-.18px}
.merge{height:31px;width:213px;background:#9fd6b6;padding-left:3px}
.i-merge{width:23px;height:25px}

/* number */
.num-fmt{width:174px}
.num-tools{padding-left:3px;height:31px}
.i-cur{width:25px;height:24px}
.pct{font-size:24px;line-height:1;width:20px;color:#555;padding-bottom:4px}
.thou{font-size:13px;width:21px;color:#555}
.dec{display:grid;grid-template-columns:9px 13px;grid-auto-rows:14px;font-size:14px;line-height:14px;width:22px;color:#555;position:relative}
.dec em{font-style:normal}
.dec .w2{grid-column:1/3;text-align:right}
.dec .w3{grid-column:1/3;text-align:right}
.dec .w4{grid-column:2;grid-row:2}
.i-arrow{width:9px;height:9px;margin-top:3px}
.i-arrow.second{grid-column:1;grid-row:2}

/* big buttons */
.bigs{display:flex}
.big{display:flex;flex-direction:column;align-items:center;flex:none}
.ico{height:53px;display:flex;align-items:flex-end;justify-content:center;padding-bottom:5px}
.t{font-size:17px;line-height:24px;height:24px;white-space:nowrap;color:#444}
.b-cf{width:114px}.b-tb{width:127px}.b-st{width:81px}
.i-cf{width:44px;height:45px;margin-left:7px}
.i-tb{width:46px;height:42px;margin-left:5px}
.i-st{width:46px;height:43px;margin-left:4px}
.b-in{width:64px;margin-left:1px}.b-ex{width:60px;margin-left:-5px}.b-fm{width:74px}
.i-in{width:44px;height:43px}
.i-ex{width:44px;height:43px}
.i-fm{width:42px;height:46px}
.edit-tools{width:48px;margin-left:8px;padding-top:4px;display:flex;flex-direction:column;gap:9px;flex:none}
.eraser-row{margin-top:-1px}
.i-sum{width:18px;height:20px}
.i-down{width:22px;height:24px}
.i-eraser{width:22px;height:21px}
.b-so{width:80px;margin-left:-6px}
.b-lo{width:100px;margin-left:0}
.so-ico{gap:1px;padding:0 4px 8px 0}
.az{display:flex;flex-direction:column;font-size:24px;font-weight:600;line-height:20px;width:18px;align-items:center}
.az-a{color:#4a7ebb}
.az-z{color:#8f5db7}
.i-fun{width:23px;height:23px;margin-bottom:8px}
.i-bin{width:42px;height:40px;margin-bottom:4px}
.collapse{flex:1;height:123px;display:flex;align-items:flex-end;justify-content:flex-end;padding:0 10px 4px 0}
.i-chev{width:14px;height:8px}

/* formula bar */
.formula{height:55px;display:flex;align-items:flex-start;padding-top:10px}
.namebox{width:154px;height:35px;margin-left:5px;border:1px solid #d0d0d0;display:flex;align-items:center;justify-content:space-between;padding:0 8px 0 6px;font-size:20px;color:#444}
.namebox .caret{border-top-color:#888}
.fdots{display:flex;flex-direction:column;gap:3px;margin-left:21px;align-self:center}
.fdots i{display:block;width:3px;height:3px;background:#aaa}
.fbuttons{width:163px;height:35px;margin-left:21px;border:1px solid #d0d0d0;display:flex;align-items:center;padding-left:20px}
.i-x{width:16px;height:16px}
.i-v{width:18px;height:16px;margin-left:37px}
.fx{font:italic bold 21px "Liberation Serif",serif;color:#666;margin-left:36px}
.finput{width:1542px;height:35px;margin-left:5px;border:1px solid #d0d0d0;display:flex;align-items:center;justify-content:space-between;padding:0 5px 0 14px;font-size:19.200px;color:#444;letter-spacing:.15px}
.i-fchev{width:12px;height:8px}

/* grid */
.sheet{height:684px;display:flex;overflow:hidden}
.grid-wrap{width:1890px;height:684px;overflow:hidden;flex:none}
.grid{table-layout:fixed;width:1890px;border-collapse:separate;border-spacing:0;font-family:"Liberation Sans",sans-serif;font-size:19.700px;color:#000}
.c0{width:43px}.ca{width:210px}.cb{width:295px}.cc{width:265px}.cd{width:182px}.ce{width:224px}.cf{width:169px}.cg{width:97px}.ch{width:127px}.ci{width:126px}.cj{width:95px}.ck{width:57px}
.grid thead th{height:24px;padding:2px 0 0;font-weight:400;font-size:20px;line-height:21px;color:#444;border-right:1px solid #d4d4d4;border-bottom:1px solid #ababab;text-align:center;background:#fff;overflow:hidden}
.grid thead th.sel{background:#dfdfdf;color:#217346;font-weight:700;border-right-color:#c8c8c8}
.grid thead th.corner{background:#fff;border-right:1px solid #ababab;padding:0}
.i-corner{width:16px;height:16px;margin:4px 0 0 23px}
.grid thead th.k{text-align:right;padding-right:3px;border-right-color:#ababab}
.grid tbody tr{height:25px}
.grid tbody tr.r1{height:27px}
.grid tbody td{height:25px;padding:0 3px;border-right:1px solid #d4d4d4;border-bottom:1px solid #d4d4d4;white-space:nowrap;overflow:hidden;vertical-align:bottom;line-height:21px}
.grid tbody td:last-child{border-right-color:#ababab}
.grid tbody .data td{font-size:20px}
.grid tbody td.num{padding-right:4px}
.rh{padding:4px 0 0;font-weight:400;font-size:19px;line-height:20px;color:#444;text-align:center;border-right:1px solid #ababab;border-bottom:1px solid #d4d4d4;background:#fff}
.rh.sel{background:#e1e1e1;color:#217346;font-weight:700;padding:0}
.grid tbody td.title-cell{position:relative;height:27px;background:#c5d9f1;text-align:center;font-weight:700;overflow:visible;box-shadow:-1px 0 0 #217346,inset 0 0 0 2px #217346,inset 0 0 0 3px #fff;border:0;padding:0;vertical-align:middle;line-height:23px}
.handle{position:absolute;right:-2px;bottom:-2px;width:6px;height:6px;background:#217346;border:0}
.fill td{background:#c5d9f1;border-right:1px solid #000!important;border-bottom:1px solid #000!important}
.fill td.plain{background:#fff;border-right:1px solid #d4d4d4!important;border-bottom:1px solid #d4d4d4!important}
.fill td.plain:last-child{border-right-color:#ababab!important}
.head td{font-weight:700}
.num{text-align:right}
.flag{background:linear-gradient(135deg,#107c41 50%,transparent 50%) no-repeat 0 0/7px 7px #c5d9f1!important}

/* vertical scroll */
.vscroll{flex:1;background:#f1f1f1;padding:1px 3px 0 3px;display:flex;flex-direction:column}
.sbtn{height:24px;background:#fff;border:1px solid #d4d4d4;display:flex;align-items:center;justify-content:center;flex:none}
.vthumb{height:611px;background:#fff;border:1px solid #ababab;flex:none}
.vtrack{height:24px;background:#e8e8e8;flex:none}

/* sheet tabs */
.sheetbar{height:34px;background:#f3f3f3;border-top:1px solid #ababab;display:flex;align-items:flex-start}
.navs{width:118px;height:33px;display:flex;align-items:center;gap:31px;padding-left:30px}
.stab{width:71px;height:26px;margin-top:3px;padding-bottom:4px;display:flex;align-items:center;justify-content:center;font-size:18.500px;color:#444;border-right:1px solid #a9a9a9}
.stab.on{width:246px;height:31px;margin-top:-1px;padding:2px 0 0;background:#fff;border:1px solid #ababab;border-top:0;border-bottom:3px solid #217346;font-weight:700;color:#217346;font-size:18.800px;letter-spacing:-.2px}
.i-plus{width:24px;height:24px;margin:5px 0 0 38px}
.bar-dots{margin-left:auto;margin-right:0;align-self:flex-start;margin-top:10px}
.hscroll{display:flex;height:24px;margin:3px 30px 0 16px;width:721px;background:#e8e8e8;flex:none}
.hbtn{width:24px;height:24px;background:#fff;border:1px solid #d4d4d4;display:flex;align-items:center;justify-content:center;flex:none}
.hthumb{width:604px;height:24px;background:#fff;border:1px solid #ababab;flex:none}
.htrack{flex:1}

/* status */
.status{height:33px;background:#217346;display:flex;align-items:center;color:#fff;padding-right:8px}
.ready{font-size:15.500px;padding:0 0 2px 7px;letter-spacing:-.3px;flex:none}
.views{display:flex;margin-left:auto}
.view{width:45px;height:32px;display:flex;align-items:center;justify-content:center;flex:none}
.view.on{background:#0f6634}
.i-view{width:18px;height:18px}
.zoom{display:flex;align-items:center;margin-left:6px;height:16px;flex:none}
.z-minus{display:block;width:11px;height:3px;background:#fff;flex:none;margin-left:1px}
.z-track{width:150px;height:1px;background:#fff;margin-left:4px;position:relative;flex:none}
.z-thumb{display:block;position:absolute;left:72px;top:-8px;width:6px;height:17px;background:#fff}
.z-plus{display:block;width:13px;height:13px;flex:none;margin-left:6px;background:linear-gradient(#fff,#fff) center/13px 3px no-repeat,linear-gradient(#fff,#fff) center/3px 13px no-repeat}
.pct100{font-size:15.500px;width:40px;margin-left:17px;letter-spacing:-.4px;flex:none;white-space:nowrap}
```
